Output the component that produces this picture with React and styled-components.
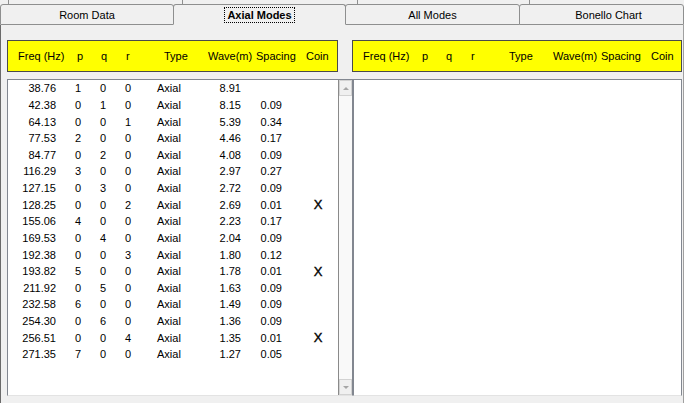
import React from 'react';
import styled, { createGlobalStyle } from 'styled-components';

const GlobalStyle = createGlobalStyle`
  body {
    margin: 0;
    background: #ffffff;
    font-family: "Liberation Sans", Arial, sans-serif;
    font-size: 11px;
    color: #000;
  }
`;

const Window = styled.div`
  width: 684px;
  height: 403px;
  background: #f0f0f0;
  display: flex;
  flex-direction: column;
  overflow: hidden;
`;

const BackRow = styled.div`
  display: flex;
  height: 4px;
  padding-left: 8px;
`;

const BackTab = styled.div`
  width: ${(p) => p.$w}px;
  border-left: 1px solid #8e8f8f;
  box-sizing: border-box;
`;

const FrontRow = styled.div`
  display: flex;
  height: 21px;
`;

const Tab = styled.div`
  width: ${(p) => p.$w}px;
  box-sizing: border-box;
  margin-left: ${(p) => (p.$first ? 0 : -1)}px;
  border: 1px solid #8e8f8f;
  border-bottom-color: ${(p) => (p.$active ? '#f0f0f0' : '#8e8f8f')};
  border-radius: 3px 3px 0 0;
  background: #f0f0f0;
  display: flex;
  align-items: center;
  justify-content: center;
  padding-left: ${(p) => p.$shift || 0}px;
  position: relative;
  z-index: ${(p) => (p.$active ? 2 : 1)};
  font-weight: ${(p) => (p.$active ? 'bold' : 'normal')};
`;

const Focus = styled.span`
  outline: 1px dotted #000;
  outline-offset: 1px;
  padding: 0 1px;
`;

const Panel = styled.div`
  flex: 1;
  border-left: 1px solid #6a6a6a;
  border-right: 1px solid #a0a0a0;
  padding: 15px 0 0 6px;
  display: flex;
  gap: 0;
`;

const Pane = styled.div`
  display: flex;
  flex-direction: column;
  gap: 7px;
  width: ${(p) => p.$w}px;
`;

const Header = styled.div`
  width: ${(p) => p.$w}px;
  margin-left: ${(p) => p.$ml || 0}px;
  height: 32px;
  box-sizing: border-box;
  background: #ffff00;
  border: 1px solid #4a4a4a;
  display: flex;
  align-items: center;
`;

const Label = styled.span`
  width: ${(p) => p.$w}px;
  margin-left: ${(p) => p.$ml || 0}px;
  white-space: nowrap;
`;

const ListBox = styled.div`
  height: 317px;
  box-sizing: border-box;
  border: 1px solid #828790;
  border-bottom-color: #e3e3e3;
  background: #fff;
  display: flex;
`;

const Rows = styled.div`
  flex: 1;
`;

const Row = styled.div`
  height: 16.625px;
  display: flex;
  align-items: center;
`;

const Cell = styled.span`
  width: ${(p) => p.$w}px;
  margin-left: ${(p) => p.$ml || 0}px;
  text-align: ${(p) => p.$align};
  white-space: nowrap;
`;

const Mark = styled(Cell)`
  font-size: 13px;
  line-height: 11px;
  -webkit-text-stroke: 0.4px #000;
`;

const ScrollBar = styled.div`
  width: 15px;
  border-left: 1px solid #8a8a8a;
  background: #f9f9f9;
  display: flex;
  flex-direction: column;
  justify-content: space-between;
`;

const ArrowButton = styled.div`
  height: 16px;
  box-sizing: border-box;
  border: 1px solid #d2d2d2;
  background: #f0f0f0;
  display: flex;
  align-items: center;
  justify-content: center;

  &::after {
    content: '';
    border-left: 3px solid transparent;
    border-right: 3px solid transparent;
    ${(p) => (p.$down ? 'border-top' : 'border-bottom')}: 3px solid #a6a6a6;
  }
`;

const headerCols = [
  { t: 'Freq (Hz)', ml: 10, w: 59 },
  { t: 'p', w: 24 },
  { t: 'q', w: 25 },
  { t: 'r', w: 38 },
  { t: 'Type', w: 44 },
  { t: 'Wave(m)', w: 48 },
  { t: 'Spacing', w: 50 },
  { t: 'Coin', w: 30 },
];

const cols = [
  { w: 48, a: 'right' },
  { ml: 12, w: 20, a: 'center' },
  { ml: 5, w: 20, a: 'center' },
  { ml: 5, w: 20, a: 'center' },
  { ml: 19, w: 50, a: 'left' },
  { w: 34, a: 'right' },
  { w: 41, a: 'right' },
];

const modes = [
  ['38.76', 1, 0, 0, '8.91', ''],
  ['42.38', 0, 1, 0, '8.15', '0.09'],
  ['64.13', 0, 0, 1, '5.39', '0.34'],
  ['77.53', 2, 0, 0, '4.46', '0.17'],
  ['84.77', 0, 2, 0, '4.08', '0.09'],
  ['116.29', 3, 0, 0, '2.97', '0.27'],
  ['127.15', 0, 3, 0, '2.72', '0.09'],
  ['128.25', 0, 0, 2, '2.69', '0.01', true],
  ['155.06', 4, 0, 0, '2.23', '0.17'],
  ['169.53', 0, 4, 0, '2.04', '0.09'],
  ['192.38', 0, 0, 3, '1.80', '0.12'],
  ['193.82', 5, 0, 0, '1.78', '0.01', true],
  ['211.92', 0, 5, 0, '1.63', '0.09'],
  ['232.58', 6, 0, 0, '1.49', '0.09'],
  ['254.30', 0, 6, 0, '1.36', '0.09'],
  ['256.51', 0, 0, 4, '1.35', '0.01', true],
  ['271.35', 7, 0, 0, '1.27', '0.05'],
];

const HeaderRow = (props) => (
  <Header {...props}>
    {headerCols.map((c) => (
      <Label key={c.t} $w={c.w} $ml={c.ml}>
        {c.t}
      </Label>
    ))}
  </Header>
);

const App = () => {
  return (
    <Window>
      <GlobalStyle />
      <BackRow>
        <BackTab $w={174} />
        <BackTab $w={175} />
        <BackTab $w={172} />
        <BackTab $w={155} />
      </BackRow>
      <FrontRow>
        <Tab $first $w={174}>Room Data</Tab>
        <Tab $active $w={173}>
          <Focus>Axial Modes</Focus>
        </Tab>
        <Tab $w={175}>All Modes</Tab>
        <Tab $w={165} $shift={14}>Bonello Chart</Tab>
      </FrontRow>
      <Panel>
        <Pane $w={346}>
          <HeaderRow $w={331} />
          <ListBox>
            <Rows>
              {modes.map((m) => (
                <Row key={m[0]}>
                  <Cell $w={cols[0].w} $align="right">{m[0]}</Cell>
                  <Cell $ml={12} $w={20} $align="center">{m[1]}</Cell>
                  <Cell $ml={5} $w={20} $align="center">{m[2]}</Cell>
                  <Cell $ml={5} $w={20} $align="center">{m[3]}</Cell>
                  <Cell $ml={19} $w={50} $align="left">Axial</Cell>
                  <Cell $w={34} $align="right">{m[4]}</Cell>
                  <Cell $w={41} $align="right">{m[5]}</Cell>
                  {m[6] && (
                    <Mark $ml={16} $w={40} $align="center">X</Mark>
                  )}
                </Row>
              ))}
            </Rows>
            <ScrollBar>
              <ArrowButton />
              <ArrowButton $down />
            </ScrollBar>
          </ListBox>
        </Pane>
        <Pane $w={329}>
          <HeaderRow $w={330} $ml={-1} />
          <ListBox>
            <Rows />
          </ListBox>
        </Pane>
      </Panel>
    </Window>
  );
};

export default App;
